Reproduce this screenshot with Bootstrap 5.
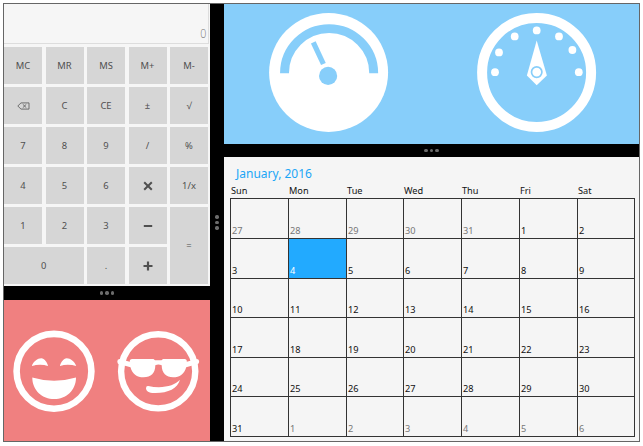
<!DOCTYPE html>
<html lang="en">
<head>
<meta charset="utf-8">
<title>Splitter panels</title>
<link href="https://cdn.jsdelivr.net/npm/bootstrap@5.3.0/dist/css/bootstrap.min.css" rel="stylesheet">
<style>
body{width:643px;height:446px;background:#fff;overflow:hidden;padding:3px 2px 4px 3px;font-family:"Noto Sans","Open Sans",sans-serif}
.frame{width:637px;height:439px;border:1px solid #666;background:#000}
.left-col{width:206px}
.right-col{width:415px}
.calc{height:282px;background:#f6f6f6}
.display{width:205px;height:40px;margin-bottom:3px;border:1px solid #ddd;border-width:0 1px 1px 0;font:300 13px/1 "Open Sans",sans-serif;color:#777;padding:0 2px 3px}
.display span{transform:scaleX(.82);transform-origin:right}
.keys{display:grid;width:204px;grid-template-columns:repeat(5,1fr);grid-template-rows:repeat(6,37px);gap:3px 3.5px}
.key{background:#d6d6d6;color:#505050;border:0;border-radius:0;padding:0;font-size:9.4px;line-height:1}
.key-wide{grid-column:span 2}
.key-tall{grid-row:5/span 2;grid-column:5}
.grip-h{height:14px;gap:2px}
.grip-v{width:14px;gap:2px}
.grip-h i,.grip-v i{width:3.4px;height:3.4px;border-radius:50%;background:#6c6c6c}
.faces{background:#f08080}
.gauges{height:140px;background:#87cefa}
.calendar{background:#f5f5f5;padding:9px 4px 4px 6px}
.month{font-size:12px;line-height:15px;color:#1ba6f5;padding-left:6px;height:16px}
.days{display:grid;grid-template-columns:58px 58px 57px 58px 58px 58px 58px}
.names{height:16px;font-size:9.2px;line-height:18px;color:#111;padding-left:1px}
.dates{grid-template-rows:40px 40px 39px 40px 39px 41px;font-size:9.2px;line-height:12px;color:#111}
.date{border:1px solid #333;border-width:1px 0 0 1px;padding:0 0 1px 1px}
.date:nth-child(7n){border-right-width:1px}
.date:nth-child(n+36){border-bottom-width:1px}
.other{color:#777}
.picked{background:#22aaff;color:#fff}
</style>
<script src="https://cdn.jsdelivr.net/npm/bootstrap@5.3.0/dist/js/bootstrap.bundle.min.js"></script>
</head>
<body>
<div class="frame d-flex">
  <div class="left-col d-flex flex-column flex-shrink-0">
    <div class="calc">
      <div class="display d-flex justify-content-end align-items-end"><span>0</span></div>
      <div class="keys">
        <button class="key">MC</button><button class="key">MR</button><button class="key">MS</button><button class="key">M+</button><button class="key">M-</button>
        <button class="key"><svg class="d-block mx-auto" width="13" height="8" fill="none" stroke="#555" stroke-width=".8"><path d="M.8 4 4 .9h8v6.2H4zM5.8 2.3l3.5 3.4m0-3.4L5.8 5.7"/></svg></button><button class="key">C</button><button class="key">CE</button><button class="key">±</button><button class="key">√</button>
        <button class="key">7</button><button class="key">8</button><button class="key">9</button><button class="key">/</button><button class="key">%</button>
        <button class="key">4</button><button class="key">5</button><button class="key">6</button><button class="key"><svg class="d-block mx-auto" width="10" height="10" stroke="#505050" stroke-width="2"><path d="m1.2 1.2 7.6 7.6m0-7.6L1.2 8.8"/></svg></button><button class="key">1/x</button>
        <button class="key">1</button><button class="key">2</button><button class="key">3</button><button class="key"><svg class="d-block mx-auto" width="10" height="10" stroke="#505050" stroke-width="2"><path d="M.8 5h8.4"/></svg></button><button class="key key-tall">=</button>
        <button class="key key-wide">0</button><button class="key">.</button><button class="key"><svg class="d-block mx-auto" width="10" height="10" stroke="#505050" stroke-width="2.2"><path d="M.5 5h9M5 .5v9"/></svg></button>
      </div>
    </div>
    <div class="grip-h d-flex justify-content-center align-items-center"><i></i><i></i><i></i></div>
    <div class="faces flex-grow-1">
      <svg class="d-block" width="206" height="141" viewBox="4 300 206 141" fill="#fff">
        <circle cx="54" cy="371.3" r="37.4" fill="none" stroke="#fff" stroke-width="6.6"/>
        <path d="M31.8 366C33.5 361.5 37.5 358.3 41.3 358.3 44.5 358.5 46.8 362 48.2 366 43 364.2 37 364.3 31.8 366zM76.2 366C74.5 361.5 70.5 358.3 66.7 358.3 63.5 358.5 61.2 362 59.8 366 65 364.2 71 364.3 76.2 366z"/>
        <path d="M32.3 377.5Q54 384 76 377.5C76 390.5 66 399.1 54.2 399.1S32.3 390.5 32.3 377.5z"/>
        <circle cx="158.2" cy="371.3" r="37.1" fill="none" stroke="#fff" stroke-width="6.4"/>
        <path d="M119.5 359Q117.2 359.2 117.3 361.7T119.7 364.2L130.5 367.2C132 373.8 137 377.3 143.5 377.3 151 377.3 155.3 373.2 155.3 365.3Q158.3 363.8 161.7 365.3C161.7 373.2 166.3 377.3 173 377.3 179.7 377.3 184.6 373.8 186.2 367.2L196.8 364.2Q199.2 364 199.2 361.7T197 359L186.8 361.8Q187 359 184.5 359H163L161.5 360.2H155L153.5 359H132.2Q129.5 359 129.8 361.8z"/>
        <path d="M148.2 386Q146 385.8 146 388.2C146.2 391 148.5 393 154.5 393 168 393.2 177.5 388.8 180 379.8 174.5 386 162 389 148.2 386z"/>
      </svg>
    </div>
  </div>
  <div class="grip-v d-flex flex-column flex-shrink-0 justify-content-center align-items-center"><i></i><i></i><i></i></div>
  <div class="right-col d-flex flex-column flex-shrink-0">
    <div class="gauges">
      <svg class="d-block" width="415" height="140" viewBox="224 4 415 140" fill="#fff">
        <circle cx="328.6" cy="72.4" r="59.5"/>
        <g fill="none" stroke="#87cefa">
          <path d="M284.5 73.2A44.6 44.6 0 0 1 373.7 73.2" stroke-width="8.9"/>
          <path d="M313.3 42.3 323.4 64" stroke-width="5.2"/>
        </g>
        <circle cx="328.1" cy="75.9" r="9.1" fill="#87cefa"/>
        <circle cx="536.6" cy="72.4" r="54.5" fill="none" stroke="#fff" stroke-width="10"/>
        <circle cx="495" cy="72.2" r="3.9"/><circle cx="499" cy="52.4" r="3.9"/><circle cx="514.7" cy="36.4" r="3.9"/><circle cx="536.7" cy="30.4" r="3.9"/><circle cx="559" cy="36.4" r="3.9"/><circle cx="572.4" cy="50" r="3.9"/><circle cx="578.8" cy="72.2" r="3.9"/>
        <path d="M536.7 40.5 546.9 75.5 536.7 85.3 526.9 75.5z"/>
        <circle cx="536.7" cy="72.1" r="5.2" fill="none" stroke="#87cefa" stroke-width="1.7"/>
      </svg>
    </div>
    <div class="grip-h d-flex justify-content-center align-items-center"><i></i><i></i><i></i></div>
    <div class="calendar flex-grow-1">
      <div class="month">January, 2016</div>
      <div class="days names"><span>Sun</span><span>Mon</span><span>Tue</span><span>Wed</span><span>Thu</span><span>Fri</span><span>Sat</span></div>
      <div class="days dates" id="dates"></div>
    </div>
  </div>
</div>
<script>
// Six weeks starting on Sunday, December 27, 2015
const grid = document.getElementById('dates');
for (let i = 0; i < 42; i++) {
  const day = new Date(2015, 11, 27 + i);
  const cell = document.createElement('div');
  cell.className = 'date d-flex align-items-end';
  if (day.getMonth() !== 0) cell.classList.add('other');
  if (day.getMonth() === 0 && day.getDate() === 4) cell.classList.add('picked');
  cell.textContent = day.getDate();
  grid.appendChild(cell);
}
</script>
</body>
</html>
